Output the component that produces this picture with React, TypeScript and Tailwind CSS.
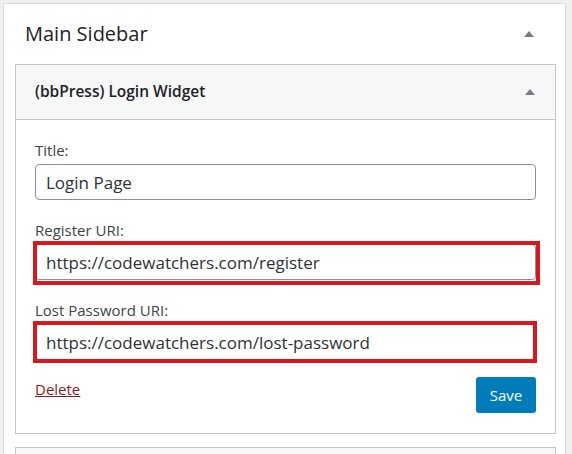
import React from "react";

const font = { fontFamily: '"Open Sans", "Noto Sans", Arial, sans-serif' };

function Arrow() {
  return (
    <svg width="10" height="6" viewBox="0 0 10 6" className="shrink-0">
      <polygon points="5,0 10,6 0,6" fill="#787c82" />
    </svg>
  );
}

function Field({ label, value, mark }: { label: string; value: string; mark?: string }) {
  return (
    <div className="mb-[20px]">
      <div className="text-[15px] leading-[20px] text-[#3c434a] mb-[4px]">{label}</div>
      <div className="relative">
        <input
          readOnly
          value={value}
          className="w-full h-[36px] rounded-[4px] border border-[#8c8f94] bg-white px-[10px] text-[17px] text-[#2c3338] outline-none"
          style={font}
        />
        {mark && <div className={`pointer-events-none absolute border-[4px] border-[#d7191f] ${mark}`} />}
      </div>
    </div>
  );
}

export default function App() {
  return (
    <div className="w-[572px] h-[454px] overflow-hidden bg-[#f0f0f1] pt-[3px] pl-[3px]" style={font}>
      <div className="w-[563px] h-[470px] bg-white border border-[#dcdcde]">
        <div className="h-[60px] flex items-center justify-between pl-[21px] pr-[31px]">
          <h2 className="text-[20px] text-[#1d2327]">Main Sidebar</h2>
          <Arrow />
        </div>

        <div className="ml-[11px] mr-[9px] border border-[#c3c4c7] bg-white">
          <div className="h-[55px] flex items-center justify-between bg-[#f6f7f7] border-b border-[#c3c4c7] pl-[19px] pr-[20px]">
            <h3 className="text-[15.5px] font-semibold text-[#1d2327]">(bbPress) Login Widget</h3>
            <Arrow />
          </div>
          <div className="pt-[20px] pl-[19px] pr-[19px] pb-[20px]">
            <Field label="Title:" value="Login Page" />
            <Field
              label="Register URI:"
              value="https://codewatchers.com/register"
              mark="-left-[2px] -right-[4px] -top-[3px] -bottom-[5px]"
            />
            <Field
              label="Lost Password URI:"
              value="https://codewatchers.com/lost-password"
              mark="-left-[2px] -right-[1px] -top-[3px] -bottom-[3px]"
            />
            <div className="flex items-start justify-between -mt-[3px]">
              <a href="#" className="mt-[2px] text-[15px] leading-[20px] text-[#8a1c1c] underline">
                Delete
              </a>
              <button className="h-[36px] w-[60px] rounded-[3px] bg-[#007cba] text-white text-[15px]">Save</button>
            </div>
          </div>
        </div>

        <div className="mt-[13px] ml-[11px] mr-[9px] h-[40px] border border-[#c3c4c7] bg-[#f6f7f7]" />
      </div>
    </div>
  );
}
